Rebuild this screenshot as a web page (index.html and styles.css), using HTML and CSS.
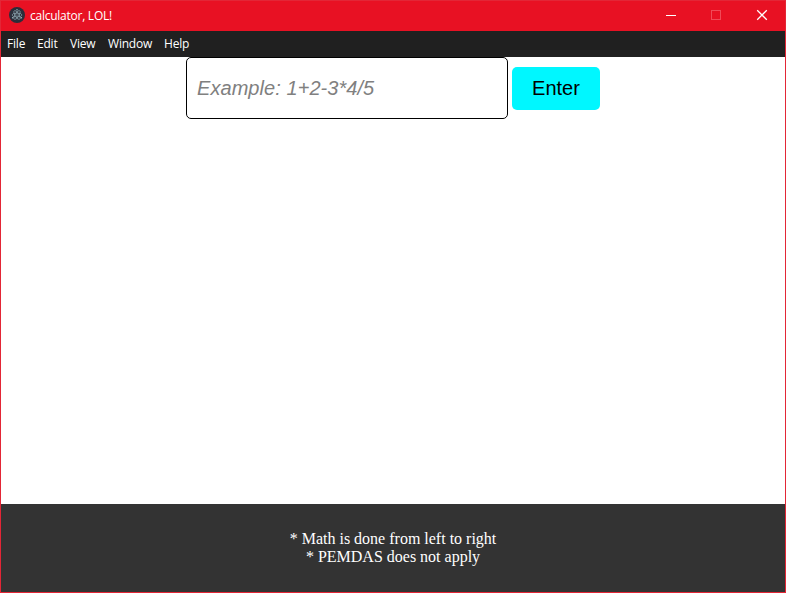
FILE: index.html
```html
<!DOCTYPE html>
<html lang="en">
<head>
<meta charset="utf-8">
<title>calculator, LOL!</title>
<link rel="stylesheet" href="styles.css">
</head>
<body>
<div class="window">
  <header class="titlebar">
    <svg class="app-icon" viewBox="0 0 16 16">
      <circle cx="8" cy="8" r="8" fill="#2b2e3a"/>
      <g fill="none" stroke="#8fa9b3" stroke-width=".65">
        <ellipse cx="8" cy="8" rx="5" ry="1.9"/>
        <ellipse cx="8" cy="8" rx="5" ry="1.9" transform="rotate(60 8 8)"/>
        <ellipse cx="8" cy="8" rx="5" ry="1.9" transform="rotate(120 8 8)"/>
      </g>
      <g fill="#9fb9c2">
        <circle cx="8" cy="8" r=".6"/>
        <circle cx="8" cy="2.8" r=".7"/>
        <circle cx="3.7" cy="10.8" r=".8"/>
        <circle cx="12.3" cy="10.8" r=".8"/>
      </g>
    </svg>
    <span class="title">calculator, LOL!</span>
    <div class="controls">
      <svg class="control" viewBox="0 0 45 30"><path d="M15 14.5h10" stroke="#fff"/></svg>
      <svg class="control" viewBox="0 0 45 30"><rect x="15.5" y="9.5" width="9" height="9" fill="none" stroke="#f04a57"/></svg>
      <svg class="control" viewBox="0 0 45 30"><path d="M16.2 9.2l9.6 9.6M25.8 9.2l-9.6 9.6" stroke="#fff" stroke-width="1.25"/></svg>
    </div>
  </header>
  <nav class="menu">
    <span class="file">File</span><span class="edit">Edit</span><span class="view">View</span><span class="win">Window</span><span class="help">Help</span>
  </nav>
  <main class="content">
    <input class="expression" type="text" placeholder="Example: 1+2-3*4/5">
    <button class="enter" type="button">Enter</button>
  </main>
  <footer class="notes">
    <div>* Math is done from left to right</div>
    <div>* PEMDAS does not apply</div>
  </footer>
</div>
</body>
</html>
```
FILE: styles.css
```css
* { box-sizing: border-box; }
body { margin: 0; }
.window {
  height: 593px;
  display: flex;
  flex-direction: column;
  border: 1px solid #e32636;
  background: #fff;
}
.titlebar {
  height: 30px;
  display: flex;
  align-items: center;
  padding-left: 8px;
  background: #e81123;
  color: #fff;
  font: 12px/16px "Open Sans", "Noto Sans", sans-serif;
}
.app-icon { width: 16px; height: 16px; margin-top: -2px; }
.title { margin-left: 5px; letter-spacing: -0.25px; }
.controls { display: flex; margin-left: auto; margin-right: -1px; }
.control { width: 45px; height: 30px; display: block; }
.menu {
  height: 26px;
  display: flex;
  align-items: center;
  padding-left: 6px;
  background: #202020;
  color: #fff;
  font: 12px/16px "Open Sans", "Noto Sans", sans-serif;
  letter-spacing: -0.2px;
}
.file { width: 30px; }
.edit { width: 33px; }
.view { width: 38px; }
.win { width: 56px; }
.content {
  flex: 1;
  display: flex;
  justify-content: center;
  align-items: flex-start;
  gap: 4px;
}
.expression {
  width: 322px;
  height: 62px;
  padding: 0 10px;
  border: 1px solid #000;
  border-radius: 5px;
  font: 20px "Liberation Sans", Arial, sans-serif;
}
.expression::placeholder {
  color: #808080;
  font-style: italic;
  letter-spacing: 0.06px;
}
.enter {
  width: 88px;
  height: 43px;
  margin-top: 10px;
  padding: 0;
  border: 0;
  border-radius: 5px;
  background: #00f7ff;
  color: #000;
  font: 20px "Liberation Sans", Arial, sans-serif;
}
.notes {
  height: 88px;
  padding-top: 26px;
  background: #333;
  color: #fff;
  text-align: center;
  font: 16px/18px "Liberation Serif", "Times New Roman", serif;
}
```
